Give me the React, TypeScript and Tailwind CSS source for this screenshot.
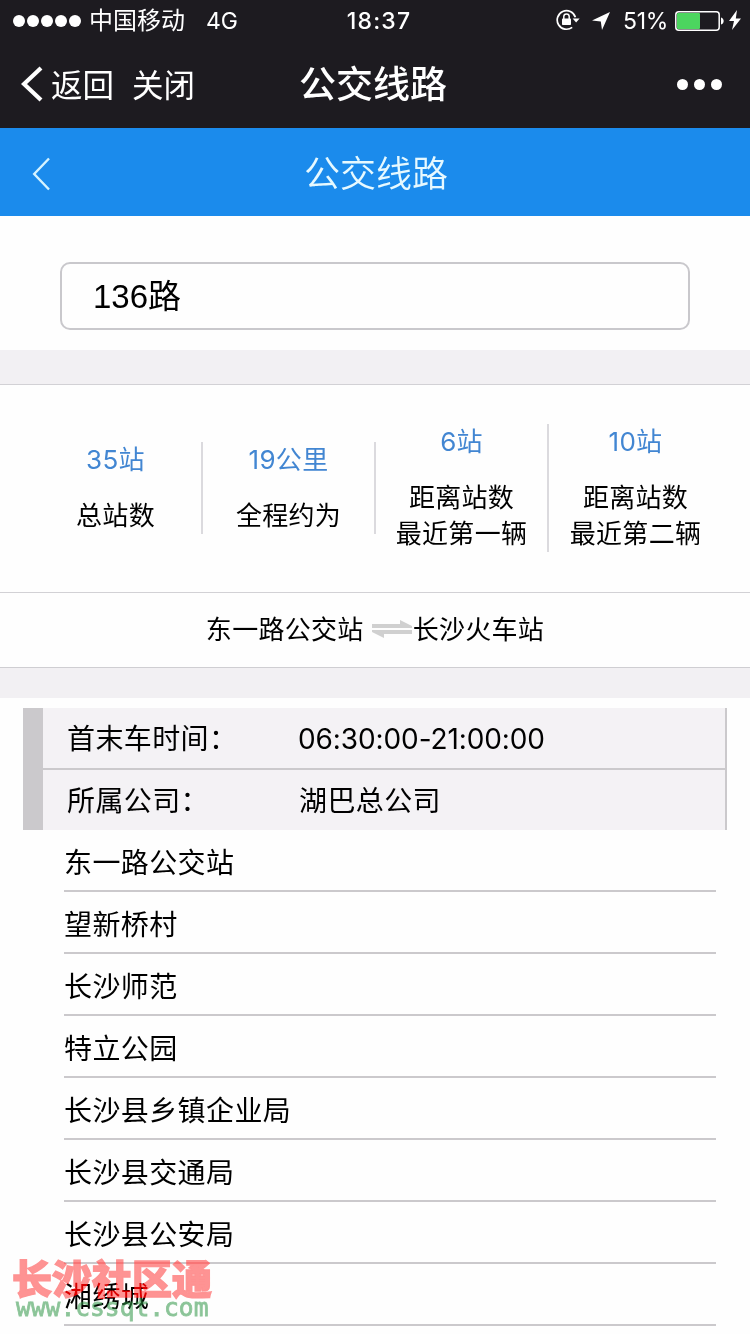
import React from 'react';

interface Stat {
  value: string;
  labels: string[];
}

const stats: Stat[] = [
  { value: '35站', labels: ['总站数'] },
  { value: '19公里', labels: ['全程约为'] },
  { value: '6站', labels: ['距离站数', '最近第一辆'] },
  { value: '10站', labels: ['距离站数', '最近第二辆'] },
];

const stations = [
  '东一路公交站',
  '望新桥村',
  '长沙师范',
  '特立公园',
  '长沙县乡镇企业局',
  '长沙县交通局',
  '长沙县公安局',
  '湘绣城',
];

const StatusBar = () => (
  <div className="flex h-10 items-center justify-between pl-[13px] pr-[9px]">
    <div className="flex w-[300px] items-center">
      <div className="mt-px flex gap-[2px]">
        {[0, 1, 2, 3, 4].map(i => (
          <span key={i} className="h-3 w-3 rounded-full bg-white" />
        ))}
      </div>
      <span className="ml-[8px] pt-0.5 text-[24px] leading-10">中国移动</span>
      <span className="ml-[21px] pt-0.5 text-[23px] leading-10">4G</span>
    </div>
    <span className="pl-1 pt-0.5 text-[23px] font-medium leading-10 tracking-[1.2px]">18:37</span>
    <div className="flex w-[300px] items-center justify-end">
      {/* Rotation lock */}
      <svg width="24" height="22" viewBox="0 0 24 22" fill="none">
        <path d="M19.4 8.2A9.3 9.3 0 1 0 16.2 18.3" stroke="white" strokeWidth="1.7" />
        <path d="M16.6 9.6h7l-3.5 4z" fill="white" />
        <rect x="6" y="9.4" width="9" height="6.6" rx="0.8" fill="white" />
        <path d="M7.8 10V7.6a2.7 2.7 0 0 1 5.4 0V10" stroke="white" strokeWidth="1.5" />
      </svg>
      <svg className="ml-3 mt-0.5" width="18" height="18" viewBox="0 0 18 18">
        <path d="M18 0 0 8.4l8.8 1L10 18z" fill="white" />
      </svg>
      <span className="ml-[13px] pt-0.5 text-[23px] leading-10 tracking-[-0.3px]">51%</span>
      <svg className="ml-[7px] mt-px" width="49" height="20" viewBox="0 0 49 20" fill="none">
        <rect x="0.8" y="0.8" width="43.4" height="18.4" rx="3" stroke="white" strokeWidth="1.5" />
        <rect x="2" y="2" width="23" height="16" rx="1" fill="#4cd55f" />
        <path d="M46 6.5c3.6 1 3.6 6 0 7z" fill="white" />
      </svg>
      <svg className="ml-[5px]" width="12" height="20" viewBox="0 0 12 20">
        <path d="M8 0 0 11h5L3 20l9-11.6H6.8z" fill="white" />
      </svg>
    </div>
  </div>
);

const NavBar = () => (
  <div className="flex h-[88px] items-center justify-between pl-[21px] pr-7">
    <div className="flex w-[238px] items-center">
      <svg width="22" height="36" viewBox="0 0 22 36" fill="none">
        <path d="M20 2 3 18l17 16" stroke="white" strokeWidth="4.2" />
      </svg>
      <span className="ml-2 pt-[3px] text-[31.5px] leading-[44px]">返回</span>
      <span className="ml-[18px] pt-[3px] text-[31.5px] leading-[44px]">关闭</span>
    </div>
    <h1 className="pt-px text-[37px] font-medium leading-[52px]">公交线路</h1>
    <div className="flex w-[235px] justify-end gap-[6px]">
      <span className="h-[11px] w-[11px] rounded-full bg-white" />
      <span className="h-[11px] w-[11px] rounded-full bg-white" />
      <span className="h-[11px] w-[11px] rounded-full bg-white" />
    </div>
  </div>
);

const App: React.FC = () => {
  return (
    <div className="relative h-[1334px] w-[750px] overflow-hidden bg-[#fefefe] font-['Inter','Noto_Sans_CJK_SC',sans-serif] text-black">
      <header className="h-32 bg-[#1d1b20] text-white">
        <StatusBar />
        <NavBar />
      </header>

      <div className="flex h-[88px] items-center bg-[#1b8bec] pt-[3px] text-white">
        <svg className="ml-8" width="19" height="34" viewBox="0 0 19 34" fill="none">
          <path d="M17 1.5 2.2 17 17 32.5" stroke="#d5f3ff" strokeWidth="2.4" />
        </svg>
        <h2 className="flex-1 pr-[49px] text-center text-[36px] font-[350] leading-[52px] text-[#e6f9ff]">公交线路</h2>
      </div>

      {/* Line search */}
      <div className="h-[134px] px-[60px] pt-[46px]">
        <div className="flex h-[68px] items-center rounded-[10px] border-2 border-[#c9c8cc] pl-[31px] pt-0.5 font-['Liberation_Sans','Noto_Sans_CJK_SC',sans-serif] text-[33px]">
          136路
        </div>
      </div>

      <div className="h-[34px] bg-[#f2f0f3]" />

      {/* Line summary */}
      <div className="flex h-[209px] items-center border-y border-[#d2d1d5] pb-0.5 pl-[30px] pr-7">
        {stats.map((s, i) => (
          <div
            key={s.value}
            className={`w-[173px] text-center text-[26px] leading-9 tracking-[0.3px] ${i < stats.length - 1 ? 'border-r-2 border-[#dbdade]' : ''}`}
          >
            <p className="mb-5 text-[#4286d2]">{s.value}</p>
            {s.labels.map(l => (
              <p key={l}>{l}</p>
            ))}
          </div>
        ))}
      </div>

      <div className="flex h-[75px] items-center justify-center border-b border-[#cfced2] pb-0.5 text-[26px] tracking-[0.3px]">
        <span>东一路公交站</span>
        <svg className="ml-2 mr-[1px]" width="40" height="18" viewBox="0 0 40 18" fill="#d0d0d0">
          <path d="M0 4h28V0l12 6v2H0zM40 14H12v4L0 12v-2h40z" />
        </svg>
        <span>长沙火车站</span>
      </div>

      <div className="h-[30px] bg-[#f2f0f3]" />

      <div className="mx-[23px] mt-[10px] border-l-[20px] border-r-2 border-[#cbc9cc] bg-[#f4f2f5] text-[28px] tracking-[0.4px]">
        <div className="flex h-[62px] items-center border-b-2 border-[#cbc9cc] pl-[24px] pt-0.5">
          <span className="w-[231px]">首末车时间：</span>
          <span className="tracking-[-0.1px]">06:30:00-21:00:00</span>
        </div>
        <div className="flex h-[60px] items-center pl-[24px] pt-0.5">
          <span className="w-[232px]">所属公司：</span>
          <span>湖巴总公司</span>
        </div>
      </div>

      <ul className="ml-16 mr-[34px] text-[28px] tracking-[0.4px]">
        {stations.map(name => (
          <li key={name} className="flex h-[62px] items-center border-b-2 border-[#cbc9cc] pt-[5px]">
            {name}
          </li>
        ))}
      </ul>

      {/* Site watermark over the list */}
      <div className="absolute left-3 top-[1258px] text-[40px] font-black leading-[44px] text-[#ed4a4a] mix-blend-hard-light [-webkit-text-stroke:1.4px_#ed4a4a]">
        长沙社区通
      </div>
      <div className="absolute left-4 top-[1294px] font-['DejaVu_Sans_Mono',monospace] text-[24.6px] leading-7 text-[#2f9646] opacity-55 [-webkit-text-stroke:0.8px_#2f9646]">
        www.cssqt.com
      </div>
    </div>
  );
};

export default App;
